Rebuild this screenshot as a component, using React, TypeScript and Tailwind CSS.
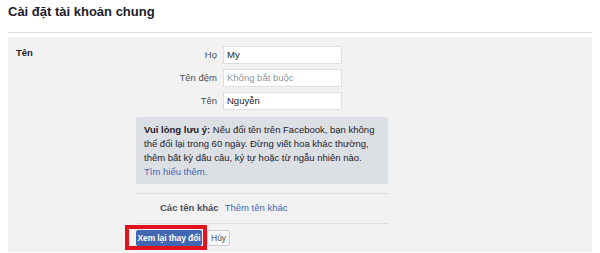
export default function App() {
  const rows = [
    { l: "Họ", v: "My", ph: false },
    { l: "Tên đệm", v: "Không bắt buộc", ph: true },
    { l: "Tên", v: "Nguyễn", ph: false },
  ];
  return (
    <div className="w-[600px] h-[253px] bg-white overflow-hidden px-[8px] text-[#1d2129]" style={{ fontFamily: '"Liberation Sans", Arial, sans-serif' }}>
      <div className="h-[33px] border-b border-[#dddfe2] pt-[4px]">
        <h1 className="text-[13px] font-bold leading-[16px]">Cài đặt tài khoản chung</h1>
      </div>
      <div className="mt-[4px] bg-[#f2f2f2] h-[215px] flex pt-[9px] pl-[8px]">
        <div className="w-[120px] shrink-0 text-[9.5px] font-bold leading-[14px]">Tên</div>
        <div className="w-[252px] shrink-0 flex flex-col">
          <div className="shrink-0 flex flex-col gap-[5px]">
            {rows.map((r) => (
              <div key={r.l} className="flex items-center">
                <div className="w-[81px] text-right text-[9.5px] text-[#4b4f56]">{r.l}</div>
                <div className={`ml-[6px] w-[119px] h-[18px] bg-white border border-[#dddfe2] px-[3px] text-[9.5px] leading-[16px] ${r.ph ? "text-[#90949c]" : "text-[#1d2129]"}`}>{r.v}</div>
              </div>
            ))}
          </div>
          <div className="shrink-0 mt-[7px] bg-[#dcdfe4] rounded-[2px] h-[67px] px-[8px] pt-[6px] text-[9.5px] leading-[14px] text-[#1d2129] whitespace-nowrap">
            <span className="font-bold">Vui lòng lưu ý:</span> Nếu đổi tên trên Facebook, bạn không
            <br />
            thể đổi lại trong 60 ngày. Đừng viết hoa khác thường,
            <br />
            thêm bất kỳ dấu câu, ký tự hoặc từ ngẫu nhiên nào.
            <br />
            <span className="text-[#4267b2]">Tìm hiểu thêm.</span>
          </div>
          <div className="shrink-0 mt-[9px] border-t border-[#dddfe2] h-[30px] flex items-center text-[9.5px]">
            <span className="ml-[24px] font-bold text-[#4b4f56]">Các tên khác</span>
            <span className="ml-[6px] text-[#4267b2]">Thêm tên khác</span>
          </div>
          <div className="shrink-0 border-t border-[#dddfe2] pt-[6px] flex items-start">
            <div className="relative flex">
              <button className="h-[16px] w-[66px] p-0 flex items-center justify-center bg-[#4267b2] border border-[#4267b2] rounded-[2px] text-white text-[8.5px] font-bold leading-[14px] whitespace-nowrap tracking-[-0.1px]">Xem lại thay đổi</button>
              <div className="absolute left-[-11px] top-[-5px] right-[-5px] bottom-[-4px] border-[4px] border-[#e0141e] pointer-events-none" />
            </div>
            <button className="ml-[5px] h-[16px] px-[3px] flex items-center bg-[#f6f7f9] border border-[#ced0d4] rounded-[2px] text-[#4b4f56] text-[8.5px] leading-[14px] whitespace-nowrap">Hủy</button>
          </div>
        </div>
      </div>
    </div>
  );
}
